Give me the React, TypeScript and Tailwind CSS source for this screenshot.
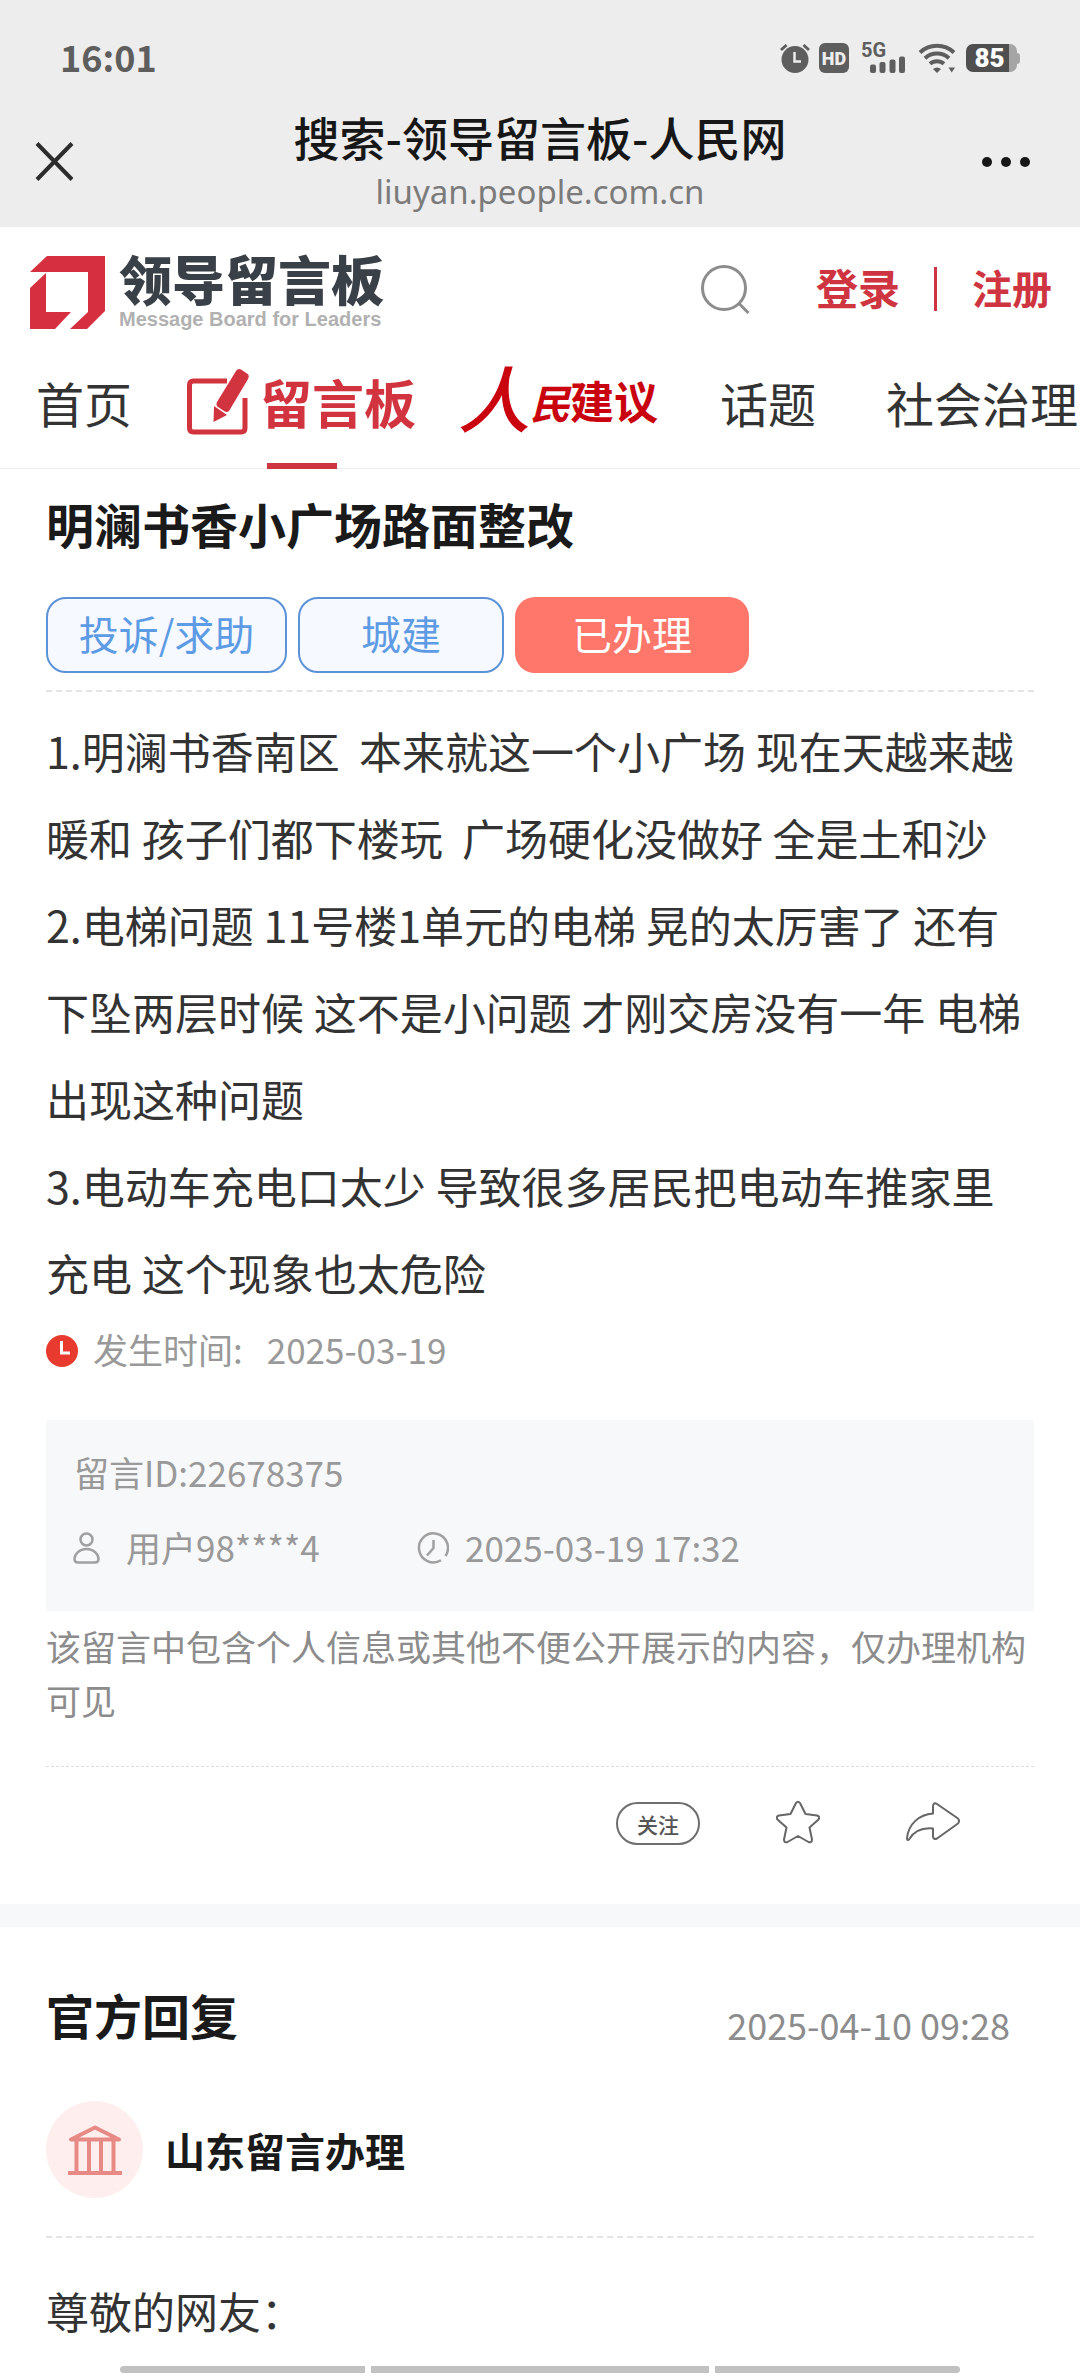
const paragraphs = [
  '1.明澜书香南区  本来就这一个小广场 现在天越来越暖和 孩子们都下楼玩  广场硬化没做好 全是土和沙',
  '2.电梯问题 11号楼1单元的电梯 晃的太厉害了 还有下坠两层时候 这不是小问题 才刚交房没有一年 电梯出现这种问题',
  '3.电动车充电口太少 导致很多居民把电动车推家里充电 这个现象也太危险',
]

function StatusBar() {
  return (
    <div className="flex h-[96px] items-center justify-between px-[60px] pt-5 text-[#5e5e5e]">
      <span className="pb-[5px] text-[36px] leading-[40px] font-bold">16:01</span>
      <div className="flex items-center">
        {/* Alarm */}
        <svg className="h-[30px] w-[30px]" viewBox="0 0 30 30" fill="none">
          <circle cx="15" cy="16.5" r="13.5" fill="currentColor" />
          <path d="M1 7 6.500 2M29 7 23.500 2" stroke="currentColor" strokeWidth="3" />
          <path d="M14.500 9v9.500H21" stroke="#ededed" strokeWidth="2.500" />
        </svg>
        <span className="ml-[9px] flex h-[30px] w-[30px] items-center justify-center rounded-[6px] bg-[#5e5e5e] font-['Roboto',sans-serif] text-[18px] font-black text-[#ededed]">
          HD
        </span>
        {/* Signal */}
        <div className="relative ml-3 h-[30px] w-[45px]">
          <span className="absolute top-0 left-0 font-['Roboto',sans-serif] text-[20px] leading-[15px] font-bold">5G</span>
          <svg className="h-full w-full" viewBox="0 0 45 30" fill="currentColor">
            <rect x="9" y="21.500" width="6" height="8.500" rx="2" />
            <rect x="18.500" y="19" width="6" height="11" rx="2" />
            <rect x="28.500" y="16.500" width="6" height="13.500" rx="2" />
            <rect x="38" y="13.500" width="6" height="16.500" rx="2" />
          </svg>
        </div>
        {/* Wifi */}
        <svg className="ml-3 h-[30px] w-[38px]" viewBox="0 0 38 30" fill="none" stroke="currentColor" strokeWidth="4">
          <path d="M2 9.500a25 25 0 0 1 34 0" />
          <path d="M7 15.200a17.500 17.500 0 0 1 24 0" />
          <path d="M12 20.800a10.500 10.500 0 0 1 14 0" />
          <path d="M15 26q4-3 8 0l-4 4z" fill="currentColor" stroke="none" />
          <path d="M30.500 24.500H37L33.700 29.500z" fill="currentColor" stroke="none" />
        </svg>
        {/* Battery */}
        <div className="ml-[10px] flex items-center">
          <span className="flex h-[28px] w-[43px] items-center justify-center rounded-l-[7px] bg-[#4f4f4f] pl-1 font-['Roboto',sans-serif] text-[26px] leading-[28px] font-black text-white">
            85
          </span>
          <span className="h-[28px] w-2 rounded-r-[7px] bg-[#a5a5a5]" />
          <span className="h-[11px] w-[3px] rounded-r-[3px] bg-[#a5a5a5]" />
        </div>
      </div>
    </div>
  )
}

function TitleBar() {
  return (
    <div className="flex h-[131px] items-center justify-between px-[35px]">
      <button aria-label="关闭" className="w-[60px]">
        <svg className="h-[39px] w-[39px]" viewBox="0 0 39 39" stroke="#2c2c2c" strokeWidth="4">
          <path d="M2 1.500 37 37.500M37 1.500 2 37.500" />
        </svg>
      </button>
      <div className="flex flex-col items-center gap-[10px]">
        <p className="text-[46px] leading-[50px] font-medium text-[#171717]">搜索-领导留言板-人民网</p>
        <p className="font-['Noto_Sans',sans-serif] text-[33px] leading-[42px] text-[#7b7b7b]">liuyan.people.com.cn</p>
      </div>
      <button aria-label="更多" className="flex w-[60px] justify-end pr-[14px]">
        <svg className="h-[10px] w-[50px] shrink-0" viewBox="0 0 50 10" fill="#171717">
          <circle cx="6" cy="5" r="5" />
          <circle cx="25" cy="5" r="5" />
          <circle cx="44" cy="5" r="5" />
        </svg>
      </button>
    </div>
  )
}

function SiteHeader() {
  return (
    <header className="flex h-[130px] items-center justify-between pr-[28px] pl-[30px]">
      <a href="#" className="flex items-center gap-[14px]">
        <svg className="h-[73px] w-[75px]" viewBox="0 0 75 73" fill="#d62f40">
          <path d="M17 0H75V55L57 73H40L58 56V16H0z" />
          <path d="M16 17V56H41L25 73H0V32z" />
        </svg>
        <span className="flex flex-col gap-1">
          <span className="text-[53px] leading-[50px] font-black text-[#3a4047]">领导留言板</span>
          <span className="font-['Liberation_Sans',sans-serif] text-[20px] leading-[24px] font-bold text-[#b1b1b1]">
            Message Board for Leaders
          </span>
        </span>
      </a>
      <div className="flex items-center pb-[6px] text-[#cf3441]">
        <button aria-label="搜索">
          <svg className="h-[50px] w-[50px]" viewBox="0 0 50 50" fill="none" stroke="#8c8c8c" strokeWidth="3">
            <circle cx="24" cy="24" r="21.500" />
            <path d="M39 39.500 48.500 49" />
          </svg>
        </button>
        <a href="#" className="ml-[66px] pb-[5px] text-[42px] leading-[60px] font-bold">登录</a>
        <span className="mr-[35px] ml-[34px] h-[44px] w-[3px] bg-[#cf3441]" />
        <a href="#" className="pb-[5px] text-[40px] leading-[60px] font-bold">注册</a>
      </div>
    </header>
  )
}

function NavTabs() {
  return (
    <nav className="flex h-[112px] items-center border-b border-[#ececec] pb-[22px] pl-[36px] text-[48px] leading-[60px] whitespace-nowrap text-[#333]">
      <a href="#">首页</a>
      <a href="#" className="relative ml-[55px] flex items-center gap-[10px] text-[52px] font-bold text-[#d1343f]">
        <svg className="h-[68px] w-[63px]" viewBox="0 0 63 68" fill="none">
          <path d="M40 13H6.500q-4 0-4 4V60q0 4 4 4H54q4 0 4-4V30" stroke="currentColor" strokeWidth="5" />
          <path d="M49 3Q51 0 54 1.500L60 5.500Q63 7.500 61 11L42 43Q40 45 37 43L31 39Q28.500 37 30 34z" fill="currentColor" />
          <path d="M27 38 40 47 26.500 54z" fill="currentColor" />
        </svg>
        留言板
        <span className="absolute bottom-[-33px] left-1/2 h-[6px] w-[70px] -translate-x-1/2 bg-[#cf3441]" />
      </a>
      <a href="#" className="ml-[42px] flex items-center text-[#c9040f]">
        <span className="pb-3 text-[72px] leading-[72px] font-medium italic">人</span>
        <span className="text-[40px] font-bold italic">民</span>
        <span className="pb-1 text-[44px] font-bold">建议</span>
      </a>
      <a href="#" className="ml-[62px]">话题</a>
      <a href="#" className="ml-[70px]">社会治理</a>
    </nav>
  )
}

function Message() {
  return (
    <article className="px-[46px] pt-[22px]">
      <h1 className="text-[48px] leading-[64px] font-bold text-[#1a1a1a]">明澜书香小广场路面整改</h1>
      <div className="mt-[42px] flex gap-[11px] text-[40px] text-[#5e9be5]">
        <span className="flex h-[76px] w-[241px] items-center justify-center rounded-[20px] border-2 border-[#5b92d8] bg-[#f6f9ff] pb-1">投诉/求助</span>
        <span className="flex h-[76px] w-[206px] items-center justify-center rounded-[20px] border-2 border-[#5b92d8] bg-[#f6f9ff] pb-1">城建</span>
        <span className="flex h-[76px] w-[234px] items-center justify-center rounded-[20px] bg-[#ff766a] pb-1 text-white">已办理</span>
      </div>
      <div className="mt-[17px] border-t-2 border-dashed border-[#e4e4e4] pt-[15px] text-[43px] leading-[87px] text-[#333]">
        {paragraphs.map((text) => (
          <p key={text} className="whitespace-pre-wrap">{text}</p>
        ))}
      </div>
      <div className="mt-[9px] flex items-center text-[35px] leading-[48px] text-[#999]">
        <svg className="mt-[3px] mr-[15px] h-8 w-8" viewBox="0 0 32 32" fill="none">
          <circle cx="16" cy="16" r="16" fill="#e83a2f" />
          <path d="M15.500 6V18H24" stroke="#fff" strokeWidth="3" />
        </svg>
        <span>发生时间:</span>
        <span className="ml-[24px]">2025-03-19</span>
      </div>

      <section className="mt-[47px] flex flex-col gap-[25px] rounded-[4px] bg-[#f7f8fa] pt-[27px] pb-[39px] text-[35px] leading-[50px] text-[#999]">
        <p className="pl-[28px]">留言ID:22678375</p>
        <div className="flex items-center pl-[27px]">
          <svg className="mt-[2px] mr-[26px] h-8 w-[27px]" viewBox="0 0 27 32" fill="none" stroke="#a0a0a0" strokeWidth="2.500">
            <circle cx="13.500" cy="7.500" r="6" />
            <path d="M13.500 17C6 17 1.500 22.500 1.500 27q0 3.500 3.500 3.500H22q3.500 0 3.500-3.500C25.500 22.500 21 17 13.500 17z" />
          </svg>
          <span className="w-[291px]">用户98****4</span>
          <svg className="mt-[2px] mr-4 h-8 w-8" viewBox="0 0 32 32" fill="none" stroke="#a0a0a0" strokeWidth="2.500">
            <path d="M28.500 24A14.500 14.500 0 1 0 24 28.300" />
            <path d="M16.500 8V16L10 23.500" />
          </svg>
          <span>2025-03-19 17:32</span>
        </div>
      </section>

      <p className="mt-[8px] text-[35px] leading-[54px] text-[#8c8c8c]">
        该留言中包含个人信息或其他不便公开展示的内容，仅办理机构可见
      </p>
      <div className="mt-[39px] flex h-[138px] items-start justify-end border-t border-dashed border-[#dedede] pt-[33px] pr-[74px]">
        <button className="mt-[2px] h-[43px] w-[84px] rounded-full border-2 border-[#6e6e6e] text-[21px] leading-[36px] font-medium text-[#555]">
          关注
        </button>
        <button aria-label="收藏" className="ml-[76px]">
          <svg className="h-[44px] w-[44px]" viewBox="0 0 44 44" fill="none" stroke="#666" strokeWidth="2" strokeLinejoin="round">
            <path d="M20 3Q22 .500 24 3L29.500 14 41 15.500Q44.500 16.500 42.500 19.500L33.500 27.500 36 39.500Q36 43 32.500 42L22 36 11.500 42Q8 43 8 39.500L10.500 27.500 1.500 19.500Q-.500 16.500 3 15.500L14.500 14z" />
          </svg>
        </button>
        <button aria-label="分享" className="mt-[2px] ml-[86px]">
          <svg className="h-[40px] w-[54px]" viewBox="0 0 54 40" fill="none" stroke="#666" strokeWidth="2" strokeLinejoin="round">
            <path d="M27 4Q27.500 0 31 2L52 16.500Q54 19 52 21.500L31 36.500Q27.500 38 27 34.500V26.500C16 25.500 8 29 3 37.500Q1 39 1 36C2.500 22 13 12.500 27 11.500z" />
          </svg>
        </button>
      </div>
    </article>
  )
}

function OfficialReply() {
  return (
    <section className="px-[46px] pt-[55px]">
      <div className="flex items-end justify-between pr-[24px]">
        <h2 className="text-[48px] leading-[64px] font-bold text-[#1a1a1a]">官方回复</h2>
        <time className="text-[36px] leading-[44px] text-[#8c8c8c]">2025-04-10 09:28</time>
      </div>
      <div className="mt-[55px] flex items-center gap-[22px] border-b-2 border-dashed border-[#e4e4e4] pb-[38px]">
        <span className="flex h-[97px] w-[97px] items-center justify-center rounded-full bg-[#feefee]">
          <svg className="h-[50px] w-[54px]" viewBox="0 0 54 50" fill="none" stroke="#e78984" strokeWidth="4">
            <path d="M3 14.500 27 2.500 51 14.500z" strokeLinejoin="round" />
            <path d="M0 48H54M8.500 16V48M21 16V48M33 16V48M45.500 16V48" />
          </svg>
        </span>
        <span className="text-[40px] leading-[60px] font-bold text-[#1a1a1a]">山东留言办理</span>
      </div>
      <p className="mt-[29px] text-[43px] leading-[87px] text-[#333]">尊敬的网友：</p>
    </section>
  )
}

export default function App() {
  return (
    <div className="bg-white font-['Noto_Sans_CJK_SC',sans-serif]">
      <div className="bg-[#ededed]">
        <StatusBar />
        <TitleBar />
      </div>
      <SiteHeader />
      <NavTabs />
      <main>
        <Message />
        <div className="h-[23px] bg-[#f7f8fa]" />
        <OfficialReply />
      </main>
      <div className="mx-[120px] mt-[12px] flex gap-[6px] pb-[3px]">
        <span className="h-[7px] w-[245px] rounded-l-full bg-[#c1c1c1]" />
        <span className="h-[7px] flex-1 bg-[#c1c1c1]" />
        <span className="h-[7px] w-[245px] rounded-r-full bg-[#c1c1c1]" />
      </div>
    </div>
  )
}
